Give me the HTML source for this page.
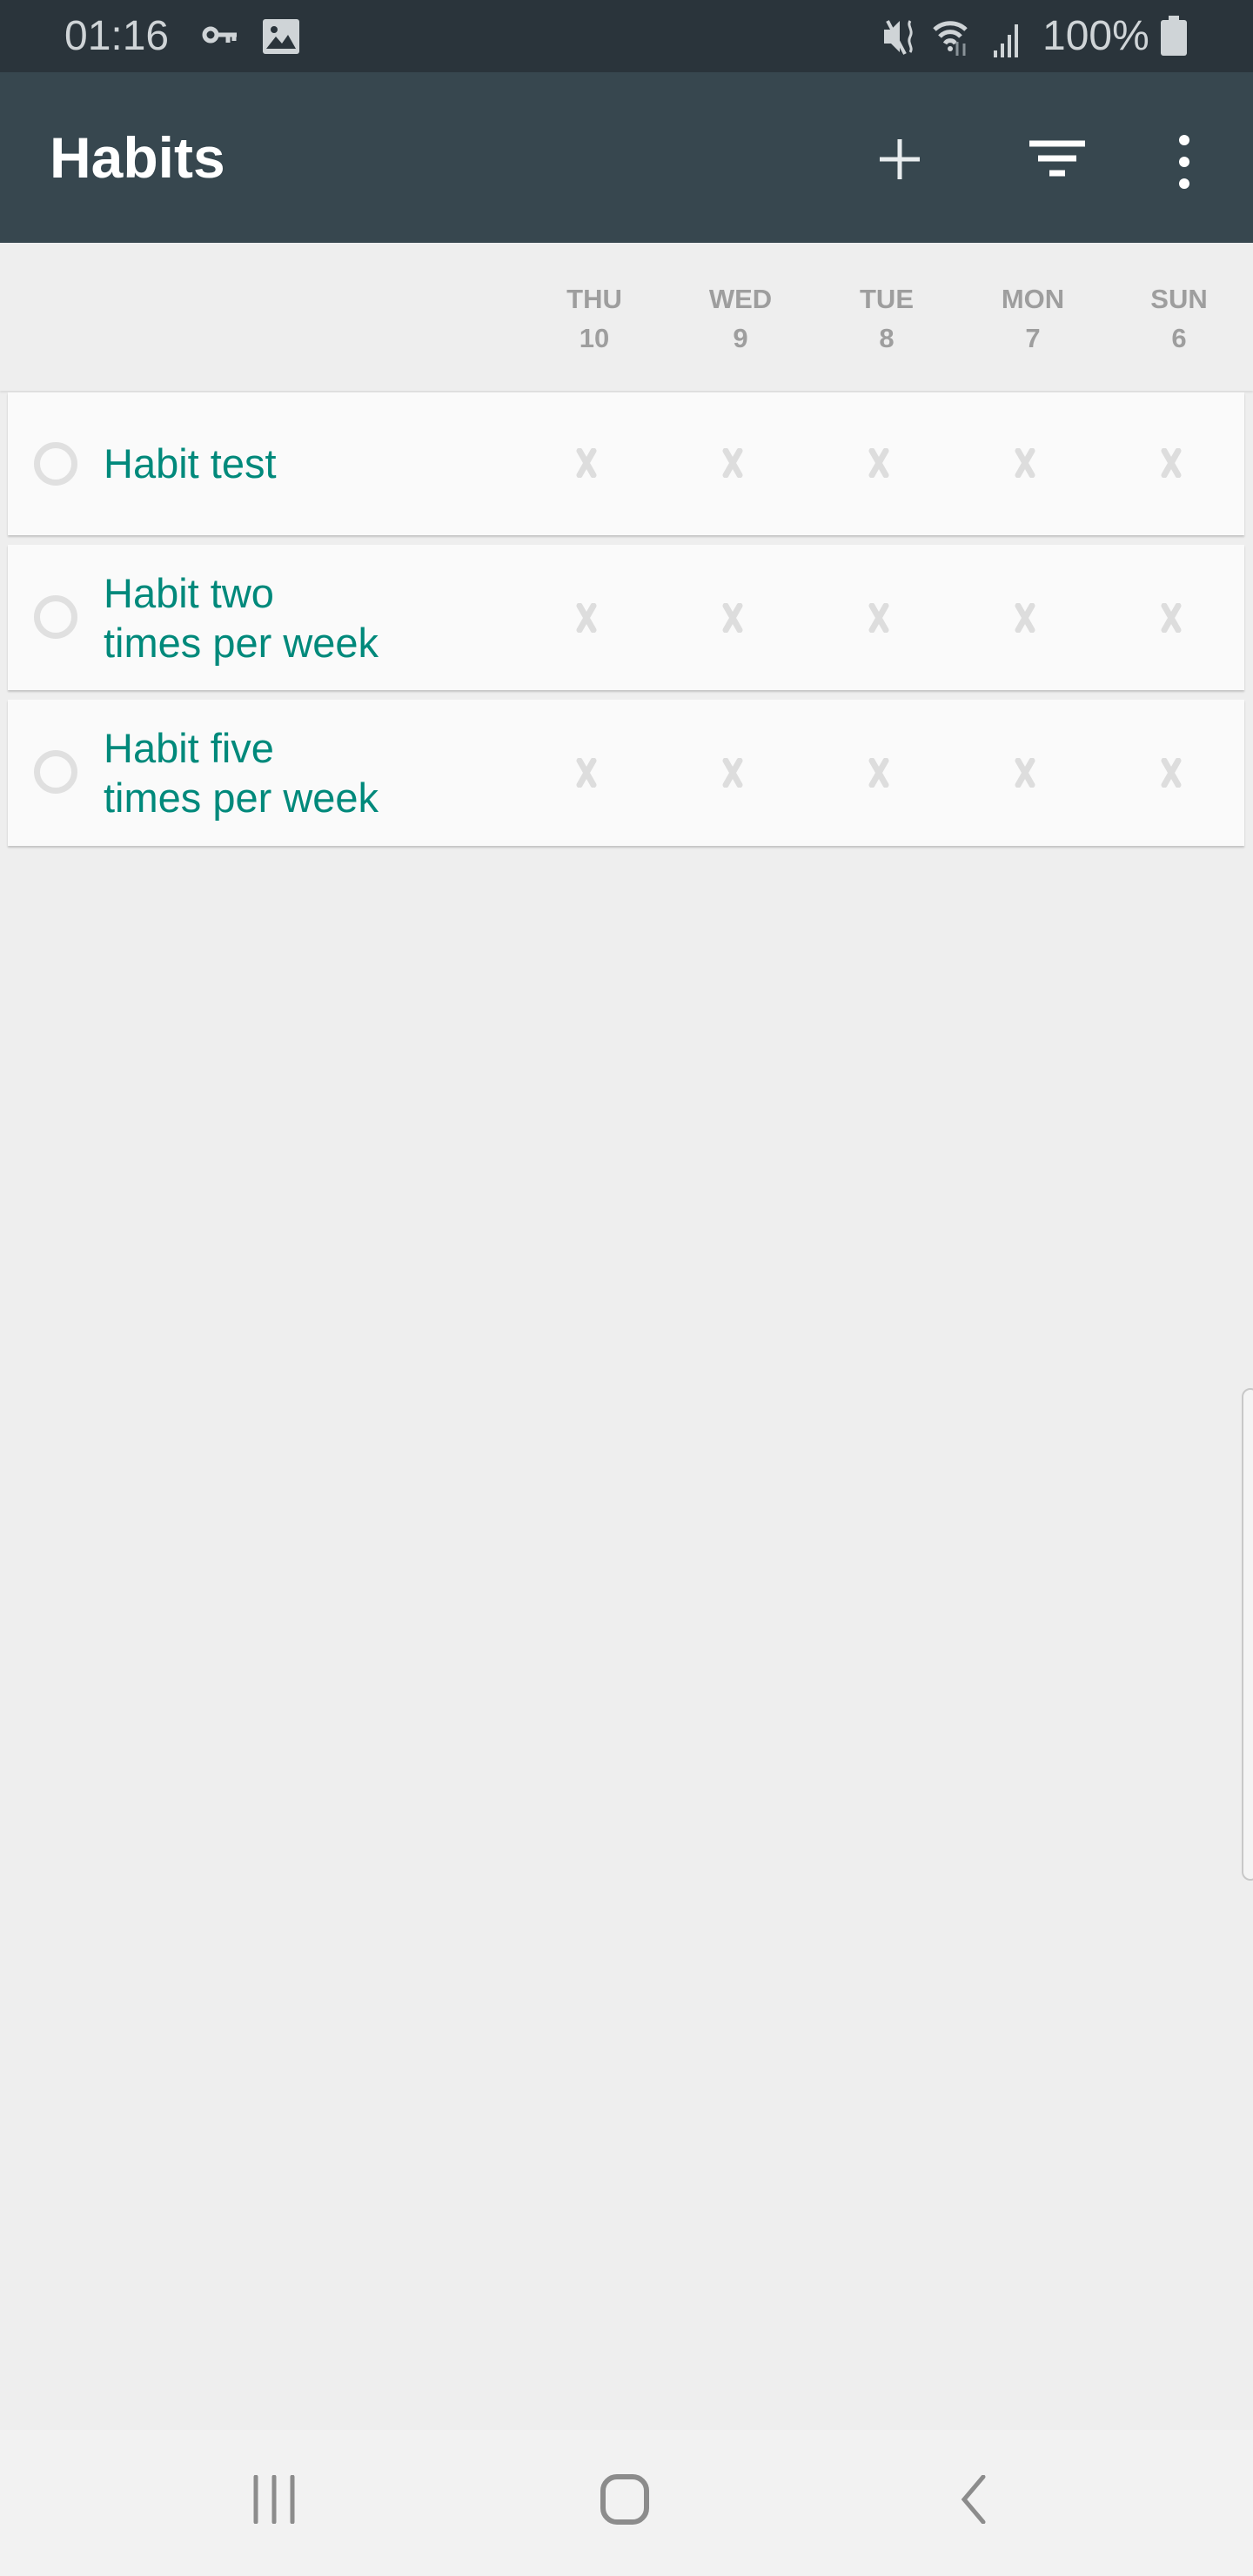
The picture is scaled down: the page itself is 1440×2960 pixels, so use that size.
<!DOCTYPE html>
<html><head><meta charset="utf-8"><style>
*{margin:0;padding:0;box-sizing:border-box}
html,body{width:1440px;height:2960px;background:#eeeeee;font-family:"Liberation Sans",sans-serif;overflow:hidden;position:relative}
.abs{position:absolute}
#status{left:0;top:0;width:1440px;height:83px;background:#2a343b;color:#cfd4d7}
#bar{left:0;top:83px;width:1440px;height:196px;background:#37474f}
.day{position:absolute;width:120px;text-align:center;color:#9e9e9e;font-weight:bold;font-size:31px;line-height:45px}
.card{position:absolute;left:9px;width:1421px;background:#fafafa;box-shadow:0 2px 2px rgba(0,0,0,0.18)}
.name{position:absolute;left:110px;color:#00897b;font-size:47px;line-height:57px}
.circ{position:absolute;left:39px;width:50px;height:50px;border:7px solid #e0e0e0;border-radius:50%}
.x{position:absolute;width:24px;height:34px}
</style></head><body>
<div id="status" class="abs">
 <div class="abs" style="left:74px;top:14px;font-size:48px;line-height:56px">01:16</div>
 <svg class="abs" style="left:232px;top:28px" width="44" height="28" viewBox="0 0 44 28"><circle cx="10" cy="12" r="7" fill="none" stroke="#cfd4d7" stroke-width="5"/><path d="M17 12H40M30 12v9M37 12v7" stroke="#cfd4d7" stroke-width="5" fill="none"/></svg>
 <svg class="abs" style="left:302px;top:22px" width="42" height="40" viewBox="0 0 42 40"><rect x="0" y="0" width="42" height="40" rx="3" fill="#cfd4d7"/><circle cx="13" cy="12" r="4" fill="#2a343b"/><path d="M4 34L15 20 22 28 29 18 38 34Z" fill="#2a343b"/></svg>
 <svg class="abs" style="left:1012px;top:18px" width="170" height="50" viewBox="0 0 170 50"><path d="M4 16h8l10-10v36L12 32H4Z" fill="#cfd4d7"/><path d="M8 6l20 38" stroke="#cfd4d7" stroke-width="4"/><path d="M34 6c-4 6 4 10 0 18s4 12 0 18" stroke="#cfd4d7" stroke-width="3" fill="none"/><path d="M62 16a26 26 0 0 1 36 0M68 24a16 16 0 0 1 24 0M74 32a7 7 0 0 1 12 0" stroke="#cfd4d7" stroke-width="5" fill="none"/><circle cx="80" cy="38" r="3" fill="#cfd4d7"/><path d="M88 30v16M96 32v14" stroke="#8a9399" stroke-width="3"/><rect x="130" y="40" width="4" height="8" fill="#cfd4d7"/><rect x="138" y="32" width="4" height="16" fill="#cfd4d7"/><rect x="146" y="22" width="4" height="26" fill="#cfd4d7"/><rect x="154" y="10" width="4" height="38" fill="#cfd4d7"/></svg>
 <div class="abs" style="left:1198px;top:14px;font-size:48px;line-height:56px">100%</div>
 <svg class="abs" style="left:1334px;top:18px" width="30" height="46" viewBox="0 0 30 46"><rect x="9" y="0" width="12" height="6" fill="#cfd4d7"/><rect x="0" y="5" width="30" height="41" rx="3" fill="#cfd4d7"/></svg>
</div>
<div id="bar" class="abs">
 <div class="abs" style="left:57px;top:62px;color:#fff;font-size:66px;line-height:72px;font-weight:bold">Habits</div>
 <svg class="abs" style="left:1009px;top:75px" width="50" height="50" viewBox="0 0 50 50"><path d="M25 2V48M2 25H48" stroke="#e8ecee" stroke-width="5"/></svg>
 <svg class="abs" style="left:1183px;top:78px" width="64" height="46" viewBox="0 0 64 46"><path d="M0 4H64M10 21H54M23 38H41" stroke="#fff" stroke-width="7"/></svg>
 <svg class="abs" style="left:1350px;top:70px" width="22" height="66" viewBox="0 0 22 66"><circle cx="11" cy="8" r="6" fill="#fff"/><circle cx="11" cy="33" r="6" fill="#fff"/><circle cx="11" cy="58" r="6" fill="#fff"/></svg>
</div>
<div class="abs" style="left:0;top:279px;width:1440px;height:170px;background:#eeeeee;box-shadow:0 2px 2px rgba(0,0,0,0.08)"></div>
<div class="day" style="left:623px;top:321px">THU<br>10</div>
<div class="day" style="left:791px;top:321px">WED<br>9</div>
<div class="day" style="left:959px;top:321px">TUE<br>8</div>
<div class="day" style="left:1127px;top:321px">MON<br>7</div>
<div class="day" style="left:1295px;top:321px">SUN<br>6</div>

<div class="card" style="top:451px;height:164px">
 <div class="circ" style="top:57px;left:30px"></div>
 <div class="name" style="top:53px">Habit test</div>
</div>
<div class="card" style="top:626px;height:167px">
 <div class="circ" style="top:58px;left:30px"></div>
 <div class="name" style="top:27px">Habit two<br>times per week</div>
</div>
<div class="card" style="top:804px;height:168px">
 <div class="circ" style="top:58px;left:30px"></div>
 <div class="name" style="top:27px">Habit five<br>times per week</div>
</div>

<svg width="0" height="0" style="position:absolute"><defs><symbol id="xm" viewBox="0 0 24 34"><path d="M4 3L20 31M20 3L4 31" stroke="#dddddd" stroke-width="7" stroke-linecap="round"/></symbol></defs></svg>
<svg class="x" style="left:662px;top:515px"><use href="#xm"/></svg><svg class="x" style="left:830px;top:515px"><use href="#xm"/></svg><svg class="x" style="left:998px;top:515px"><use href="#xm"/></svg><svg class="x" style="left:1166px;top:515px"><use href="#xm"/></svg><svg class="x" style="left:1334px;top:515px"><use href="#xm"/></svg>
<svg class="x" style="left:662px;top:693px"><use href="#xm"/></svg><svg class="x" style="left:830px;top:693px"><use href="#xm"/></svg><svg class="x" style="left:998px;top:693px"><use href="#xm"/></svg><svg class="x" style="left:1166px;top:693px"><use href="#xm"/></svg><svg class="x" style="left:1334px;top:693px"><use href="#xm"/></svg>
<svg class="x" style="left:662px;top:871px"><use href="#xm"/></svg><svg class="x" style="left:830px;top:871px"><use href="#xm"/></svg><svg class="x" style="left:998px;top:871px"><use href="#xm"/></svg><svg class="x" style="left:1166px;top:871px"><use href="#xm"/></svg><svg class="x" style="left:1334px;top:871px"><use href="#xm"/></svg>

<div class="abs" style="left:1427px;top:1595px;width:20px;height:566px;border:2px solid #c8c8c8;border-radius:10px;background:#f4f4f4"></div>

<div class="abs" style="left:0;top:2792px;width:1440px;height:168px;background:#f2f2f2">
 <svg class="abs" style="left:286px;top:52px" width="60" height="56" viewBox="0 0 60 56"><path d="M8 2V54M29 2V54M50 2V54" stroke="#8c8c8c" stroke-width="5" stroke-linecap="round"/></svg>
 <svg class="abs" style="left:689px;top:50px" width="58" height="60" viewBox="0 0 58 60"><rect x="4" y="4" width="50" height="52" rx="16" fill="none" stroke="#8c8c8c" stroke-width="6"/></svg>
 <svg class="abs" style="left:1100px;top:52px" width="36" height="56" viewBox="0 0 36 56"><path d="M30 2L8 28 30 54" fill="none" stroke="#8c8c8c" stroke-width="5" stroke-linecap="round"/></svg>
</div>
</body></html>
